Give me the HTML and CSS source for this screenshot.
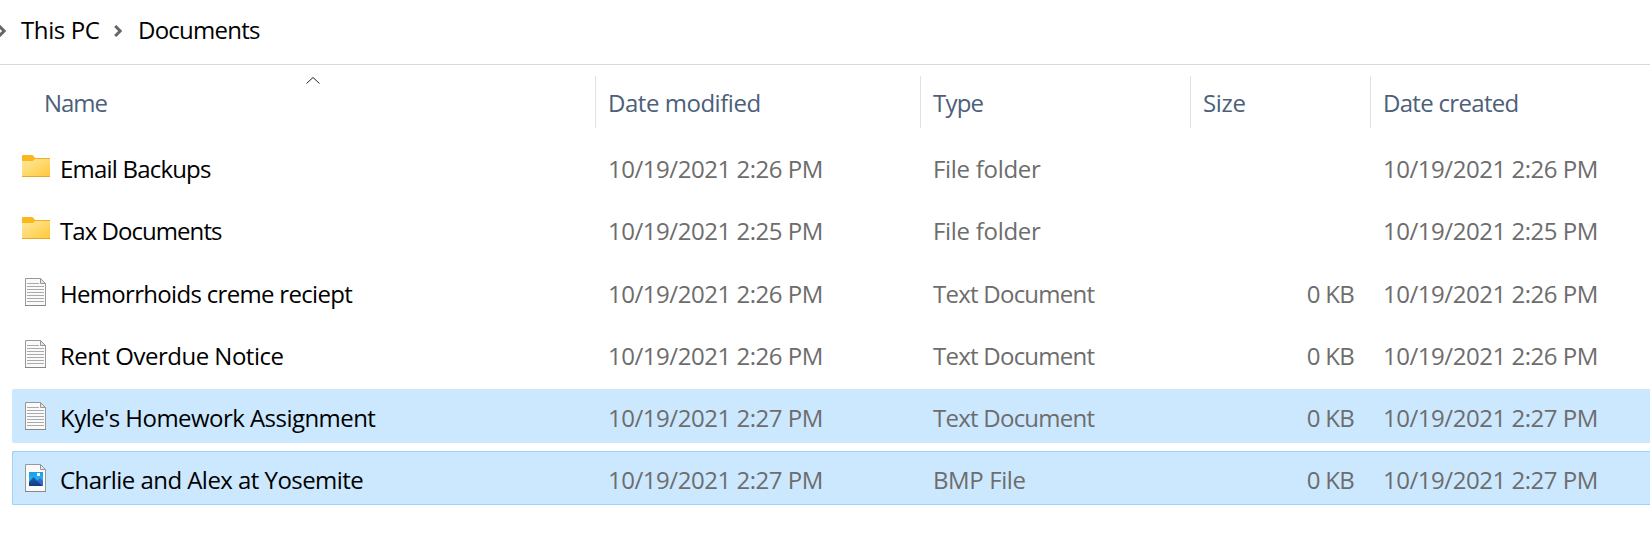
FILE: index.html
```html
<!DOCTYPE html>
<html lang="en">
<head>
<meta charset="utf-8">
<title>Documents</title>
<link rel="stylesheet" href="styles.css">
</head>
<body>
<svg class="defs" width="0" height="0" aria-hidden="true">
  <defs>
    <linearGradient id="fold" x1="0" y1="0" x2="1" y2="1">
      <stop offset="0" stop-color="#ffe8a0"/><stop offset="1" stop-color="#ffc937"/>
    </linearGradient>
    <linearGradient id="sky" x1="0" y1="0" x2="0" y2="1">
      <stop offset="0" stop-color="#1b9de8"/><stop offset="1" stop-color="#2fc0f0"/>
    </linearGradient>
    <linearGradient id="hill" x1="0" y1="0" x2="0" y2="1">
      <stop offset="0" stop-color="#1c63b8"/><stop offset="1" stop-color="#123a80"/>
    </linearGradient>
    <symbol id="folder" viewBox="0 0 28 22">
      <path d="M0 1Q0 0 1 0H10Q11 0 12 1.5L13 3H27Q28 3 28 4V12H0Z" fill="#fbb81c"/>
      <path d="M0 6H10Q11.500 6 12.500 4.500L13 4H28V21Q28 22 27 22H1Q0 22 0 21Z" fill="url(#fold)"/>
      <path d="M0 21.500H28" stroke="#e6a92b"/>
      <path d="M13 3.500H28" stroke="#eeb02a"/>
    </symbol>
    <symbol id="page" viewBox="0 0 21 28">
      <path d="M.5.5H15.500L20.500 5.500V27.500H.5Z" fill="#fafafa" stroke="#969998"/>
      <path d="M15.500.5V5.500H20.500Z" fill="#e4e4e4" stroke="#969998"/>
      <path d="M0 27.500H21" stroke="#858888"/>
    </symbol>
    <symbol id="text" viewBox="0 0 21 28">
      <use href="#page" width="21" height="28"/>
      <path d="M2 5.500H14M2 8.500H19M2 11.500H19M2 14.500H19M2 17.500H19M2 20.500H19M2 23.500H19" stroke="#a9abab"/>
    </symbol>
    <symbol id="image" viewBox="0 0 21 28">
      <use href="#page" width="21" height="28"/>
      <rect x="4" y="8" width="14" height="14" fill="url(#sky)"/>
      <path d="M12 17L15 14L18 17V22H12Z" fill="#3a66cf"/>
      <path d="M4 18L8.500 13L17.500 22H4Z" fill="url(#hill)"/>
      <rect x="12" y="9" width="3" height="3" fill="#e6f8ff"/>
    </symbol>
  </defs>
</svg>

<nav class="crumbs">
  <svg class="chevron" viewBox="0 0 8 12"><path d="M1.200 1L6.200 6L1.200 11"/></svg>
  <span class="crumb-pc t40">This PC</span>
  <svg class="chevron" viewBox="0 0 8 12"><path d="M1.200 1L6.200 6L1.200 11"/></svg>
  <span class="crumb-docs t75">Documents</span>
</nav>

<div class="head grid">
  <div class="cell first t104">Name<svg class="sort" viewBox="0 0 14 7"><path d="M.5 6.500L7 .5L13.500 6.500"/></svg></div>
  <div class="cell t46">Date modified</div>
  <div class="cell t80">Type</div>
  <div class="cell t32">Size</div>
  <div class="cell t68">Date created</div>
</div>

<main class="list">
  <div class="row grid directory">
    <div class="name t80"><svg class="folder"><use href="#folder"/></svg>Email Backups</div>
    <div class="meta t46">10/19/2021 2:26 PM</div><div class="meta t30">File folder</div><div class="size"></div><div class="meta t46">10/19/2021 2:26 PM</div>
  </div>
  <div class="row grid directory">
    <div class="name t95"><svg class="folder"><use href="#folder"/></svg>Tax Documents</div>
    <div class="meta t46">10/19/2021 2:25 PM</div><div class="meta t30">File folder</div><div class="size"></div><div class="meta t46">10/19/2021 2:25 PM</div>
  </div>
  <div class="row grid">
    <div class="name t68"><svg class="file"><use href="#text"/></svg>Hemorrhoids creme reciept</div>
    <div class="meta t46">10/19/2021 2:26 PM</div><div class="meta t75">Text Document</div><div class="size">0 KB</div><div class="meta t46">10/19/2021 2:26 PM</div>
  </div>
  <div class="row grid">
    <div class="name t50"><svg class="file"><use href="#text"/></svg>Rent Overdue Notice</div>
    <div class="meta t46">10/19/2021 2:26 PM</div><div class="meta t75">Text Document</div><div class="size">0 KB</div><div class="meta t46">10/19/2021 2:26 PM</div>
  </div>
  <div class="row grid selected">
    <div class="name t54"><svg class="file"><use href="#text"/></svg>Kyle's Homework Assignment</div>
    <div class="meta t46">10/19/2021 2:27 PM</div><div class="meta t75">Text Document</div><div class="size">0 KB</div><div class="meta t46">10/19/2021 2:27 PM</div>
  </div>
  <div class="row grid selected focused">
    <div class="name t54"><svg class="file"><use href="#image"/></svg>Charlie and Alex at Yosemite</div>
    <div class="meta t46">10/19/2021 2:27 PM</div><div class="meta t40">BMP File</div><div class="size">0 KB</div><div class="meta t46">10/19/2021 2:27 PM</div>
  </div>
</main>
</body>
</html>
```
FILE: styles.css
```css
* { box-sizing: border-box; }

body {
  margin: 0;
  height: 544px;
  overflow: hidden;
  background: #fff;
  color: #000;
  font: 24px/33px "Open Sans", "Noto Sans", sans-serif;
  white-space: nowrap;
}

.defs { display: block; }

/* breadcrumb bar */
.crumbs {
  display: flex;
  height: 65px;
  padding-top: 13px;
  border-bottom: 1px solid #d9d9d9;
}
.chevron {
  width: 8px;
  height: 12px;
  margin: 12px 0 0 -2px;
  flex: none;
  fill: none;
  stroke: #666;
  stroke-width: 3;
}
.crumb-pc { width: 95px; margin-left: 15px; }
.crumb-docs { margin-left: 16px; }

/* shared column layout */
.grid {
  display: grid;
  grid-template-columns: 583px 325px 270px 180px 1fr;
  margin-left: 12px;
}

.head {
  margin-top: 11px;
  height: 52px;
  color: #4c607a;
}
.cell {
  border-left: 1px solid #e2e2e2;
  padding: 10px 0 0 12px;
}
.cell.first {
  position: relative;
  border-left: 0;
  padding-left: 32px;
}
.sort {
  position: absolute;
  left: 294px;
  top: 1px;
  width: 14px;
  height: 7px;
  fill: none;
  stroke: #222;
}

/* file rows */
.list {
  display: flex;
  flex-direction: column;
  gap: 8px;
  margin-top: 13px;
}
.row {
  height: 54px;
  padding-top: 12px;
  border-radius: 2px 0 0 2px;
}
.directory { padding-top: 11px; }
.selected { background: #cce8ff; }
.focused { box-shadow: inset 1px 1px #99d1ff, inset 0 -1px #99d1ff; }

.name { display: flex; }
.folder { width: 28px; height: 22px; margin: 3px 10px 0 10px; flex: none; }
.file { width: 21px; height: 28px; margin: 1px 14px 0 13px; flex: none; }
.meta { padding-left: 13px; color: #6d6d6d; }
.size {
  padding-right: 16px;
  text-align: right;
  color: #6d6d6d;
  letter-spacing: -.7px;
}

/* letter tracking */
.t30 { letter-spacing: -.3px; }
.t32 { letter-spacing: -.32px; }
.t40 { letter-spacing: -.4px; }
.t46 { letter-spacing: -.47px; }
.t50 { letter-spacing: -.5px; }
.t54 { letter-spacing: -.545px; }
.t68 { letter-spacing: -.69px; }
.t75 { letter-spacing: -.753px; }
.t80 { letter-spacing: -.8px; }
.t95 { letter-spacing: -.95px; }
.t104 { letter-spacing: -1.035px; }
```
